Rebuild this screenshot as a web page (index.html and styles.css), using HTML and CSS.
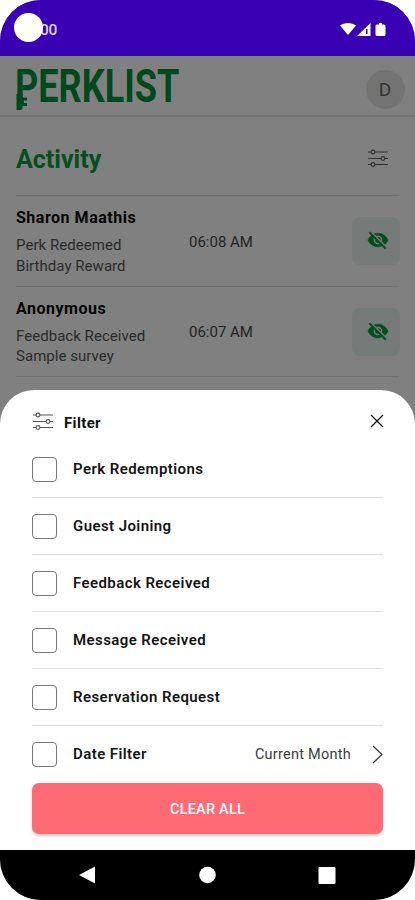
FILE: index.html
```html
<!DOCTYPE html>
<html lang="en">
<head>
<meta charset="utf-8">
<title>Perklist Activity</title>
<link rel="stylesheet" href="styles.css">
</head>
<body>
<svg width="0" height="0" class="defs" aria-hidden="true">
  <symbol id="sliders" viewBox="0 0 22 20">
    <g fill="none" stroke="currentColor" stroke-width="1.1">
      <path d="M1 4h3M8 4h13M1 10.500h13M18 10.500h3M1 16.500h3M8 16.500h13"/>
      <circle cx="6" cy="4" r="1.900"/><circle cx="16" cy="10.500" r="1.900"/><circle cx="6" cy="16.500" r="1.900"/>
    </g>
  </symbol>
  <symbol id="eye-off" viewBox="0 0 24 24">
    <path fill="currentColor" stroke="currentColor" stroke-width=".5" d="M12 7c2.760 0 5 2.240 5 5 0 .65-.13 1.260-.36 1.830l2.920 2.920c1.510-1.260 2.700-2.890 3.430-4.750-1.730-4.390-6-7.500-11-7.500-1.400 0-2.740.25-3.980.7l2.160 2.160C10.740 7.130 11.350 7 12 7zM2 4.270l2.280 2.280.46.46C3.080 8.300 1.780 10.020 1 12c1.730 4.390 6 7.500 11 7.500 1.550 0 3.030-.3 4.380-.84l.42.42L19.730 22 21 20.730 3.270 3 2 4.270zM7.530 9.800l1.550 1.550c-.05.21-.08.43-.08.65 0 1.660 1.340 3 3 3 .22 0 .44-.03.65-.08l1.550 1.550c-.67.33-1.410.53-2.200.53-2.760 0-5-2.240-5-5 0-.79.2-1.530.53-2.200zm4.310-.78l3.150 3.150.02-.16c0-1.660-1.340-3-3-3l-.17.010z"/>
  </symbol>
</svg>
<div class="phone">
  <div class="status">
    <span class="clock">00</span>
    <span class="camera"></span>
    <svg class="signals" width="50" height="18" viewBox="0 0 50 18" fill="#fff">
      <path d="M1 4.500C5.500 1 12.500 1 17 4.500L9 14Z"/>
      <path fill-rule="evenodd" d="M18 15L31.500 2v13ZM27 8v5h1.500V8Z"/>
      <path d="M40 2h3v1.500h2q1.500 0 1.500 1.500v8.500q0 1.500-1.500 1.500h-7q-1.500 0-1.500-1.500V5q0-1.500 1.500-1.500h2Z"/>
    </svg>
  </div>
  <main class="app">
    <header class="topbar">
      <div class="logo"><span class="wordmark">PERKLIST</span>
        <svg class="key" width="12" height="16" viewBox="0 0 12 16"><path fill="#00491f" d="M.5 0h6v3.500h4.500v3H8v2.500h3v3H6.500v2.500L5 16H.5Z"/></svg>
      </div>
      <div class="avatar">D</div>
    </header>
    <div class="heading"><h1>Activity</h1><svg width="22" height="20"><use href="#sliders"/></svg></div>
    <section class="entry">
      <div class="info"><h2>Sharon Maathis</h2><p class="l1">Perk Redeemed</p><p class="l2">Birthday Reward</p></div>
      <time>06:08 AM</time>
      <div class="hide"><svg width="22" height="22"><use href="#eye-off"/></svg></div>
    </section>
    <section class="entry second">
      <div class="info"><h2 class="anon">Anonymous</h2><p class="l3">Feedback Received</p><p class="l4">Sample survey</p></div>
      <time>06:07 AM</time>
      <div class="hide"><svg width="22" height="22"><use href="#eye-off"/></svg></div>
    </section>
  </main>
  <div class="sheet">
    <div class="sheet-head">
      <svg width="22" height="20"><use href="#sliders"/></svg><span>Filter</span>
      <svg class="close" width="14" height="14" viewBox="0 0 14 14"><path d="M1 1l12 12M13 1L1 13" fill="none" stroke="#111" stroke-width="1.300"/></svg>
    </div>
    <div class="option"><i class="box"></i><span>Perk Redemptions</span></div>
    <div class="option"><i class="box"></i><span>Guest Joining</span></div>
    <div class="option"><i class="box"></i><span>Feedback Received</span></div>
    <div class="option"><i class="box"></i><span>Message Received</span></div>
    <div class="option"><i class="box"></i><span>Reservation Request</span></div>
    <div class="option last"><i class="box"></i><span>Date Filter</span><em>Current Month</em>
      <svg width="11" height="19" viewBox="0 0 11 19"><path d="M1 1l9 8.500L1 18" fill="none" stroke="#333" stroke-width="1.200"/></svg>
    </div>
    <button class="clear">CLEAR ALL</button>
  </div>
  <nav class="nav">
    <svg width="415" height="50" viewBox="0 0 415 50" fill="#fff"><path d="M79 25L95 16.500v17Z"/><circle cx="207.500" cy="25" r="8.300"/><rect x="318.500" y="17" width="17" height="17" rx="1"/></svg>
  </nav>
</div>
</body>
</html>
```
FILE: styles.css
```css
* { box-sizing: border-box; }
body { margin: 0; background: #fff; font-family: Roboto, "Liberation Sans", sans-serif; }
.defs { position: absolute; }
h1, h2, p { margin: 0; }
svg { display: block; flex: none; }
.phone { position: relative; width: 415px; height: 900px; overflow: hidden; border-radius: 41px; display: flex; flex-direction: column; background: #808080; }
.status { position: relative; height: 56px; flex: none; background: #3a00b3; display: flex; align-items: center; justify-content: space-between; padding: 4px 26px 0 40px; color: #fff; }
.clock { font-size: 15.500px; font-weight: 500; color: #ddd3f4; letter-spacing: -.3px; }
.camera { position: absolute; left: 14px; top: 13px; width: 29px; height: 29px; border-radius: 50%; background: #fff; }
.app { flex: 1; }
.topbar { height: 61px; border-bottom: 2px solid #747474; padding: 7px 10px 0 16px; display: flex; justify-content: space-between; align-items: center; }
.logo { position: relative; height: 52px; width: 170px; }
.wordmark { display: block; font-size: 46px; line-height: 52px; font-weight: 700; color: #00491f; transform: scaleX(.785); transform-origin: left; margin-left: -1px; margin-top: -3px; }
.key { position: absolute; left: 0; top: 31px; }
.avatar { width: 39px; height: 39px; border-radius: 50%; background: #737373; color: #343434; font-size: 19px; display: flex; align-items: center; justify-content: center; padding-right: 1px; }
.heading { height: 79px; margin: 0 16px; border-bottom: 1px solid #717171; display: flex; align-items: center; justify-content: space-between; padding: 4px 10px 0 0; color: #303030; }
.heading h1 { font-size: 25px; font-weight: 700; color: #054e1f; margin-top: 3px; }
.heading svg { margin-top: -1px; }
.entry { height: 91px; margin: 0 16px; border-bottom: 1px solid #717171; display: flex; align-items: center; }
.second { height: 90px; }
.info { width: 173px; color: #2b2b2b; }
.info h2 { font-size: 16px; line-height: 24px; font-weight: 700; color: #050505; margin-bottom: 5px; letter-spacing: .52px; }
.info p { font-size: 15px; line-height: 20.500px; letter-spacing: .04px; }
.entry time { font-size: 15px; color: #242424; margin-top: 1px; }
.hide { margin-left: auto; margin-right: -1px; width: 48px; height: 48px; border-radius: 8px; background: #747b78; color: #074b20; display: flex; align-items: center; justify-content: center; padding: 0 0 2px 3px; }
.sheet { position: absolute; left: 0; top: 390px; width: 415px; height: 460px; border-radius: 34px 34px 0 0; background: #fff; padding: 10px 32px 0; }
.sheet-head { height: 41px; display: flex; align-items: center; color: #555; }
.sheet-head span { font-size: 15px; font-weight: 700; color: #111; margin: 4px 0 0 10px; letter-spacing: .35px; }
.close { margin: 1px -1px 0 auto; }
.option { height: 57px; border-bottom: 1px solid #dedede; display: flex; align-items: center; }
.last { border: 0; }
.box { width: 25px; height: 25px; border: 1px solid #777; border-radius: 4px; margin-right: 16px; margin-top: 1px; flex: none; }
.last .box { margin-top: 0; }
.option span { font-size: 15px; font-weight: 600; color: #151515; letter-spacing: .42px; }
.last span { margin-top: -2px; }
.option em { font-style: normal; font-size: 14.500px; color: #3c3c3c; margin: 0 21px 0 auto; letter-spacing: .25px; }
.clear { display: block; width: 351px; height: 51px; border: 0; border-radius: 7px; background: #ff6b74; color: #fff; font: 500 14.500px Roboto, "Liberation Sans", sans-serif; letter-spacing: .2px; padding-top: 3px; box-shadow: 0 2px 3px #0003; }
.nav { height: 50px; flex: none; background: #000; }
```
